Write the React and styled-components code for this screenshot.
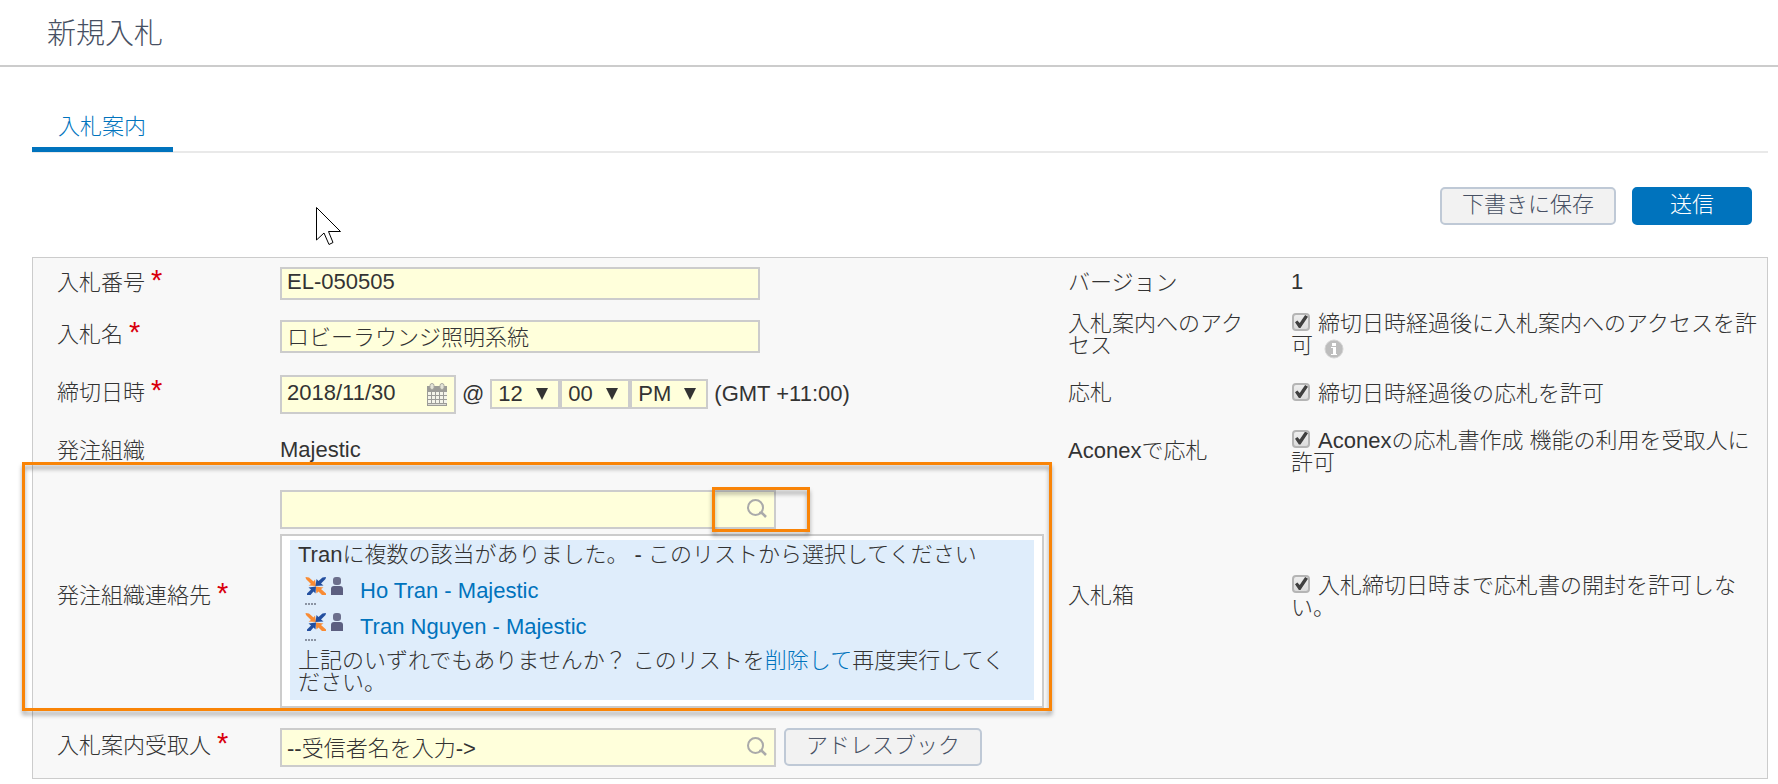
import React, { useState } from 'react';
import styled, { createGlobalStyle } from 'styled-components';

const GlobalStyle = createGlobalStyle`
  * {
    box-sizing: border-box;
  }

  body {
    margin: 0;
    background-color: #fff;
    color: #333;
    font-family: "Liberation Sans", "Noto Sans CJK JP", sans-serif;
    font-size: 22px;
    font-weight: 300;
    line-height: 22px;
  }

  input, select, button {
    font: inherit;
    color: inherit;
  }
`;

const PageHeader = styled.header`
  padding: 18px 47px 14px;
  border-bottom: 2px solid #ccc;
`;

const Title = styled.h1`
  margin: 0;
  color: #475063;
  font-size: 29px;
  font-weight: 300;
  line-height: 33px;
`;

const PageBody = styled.main`
  padding: 38px 10px 5px 32px;
`;

const TabBar = styled.nav`
  display: flex;
  border-bottom: 2px solid #e9e9e9;
`;

const Tab = styled.a`
  margin-bottom: -1px;
  padding: 11px 27px 9px 26px;
  border-bottom: 5px solid #0073bd;
  color: #0073bd;
  text-decoration: none;
`;

const Toolbar = styled.div`
  position: relative;
  display: flex;
  justify-content: flex-end;
  gap: 16px;
  padding: 34px 16px 32px;
`;

const Button = styled.button`
  height: 38px;
  min-width: 120px;
  padding: 0 20px 2px;
  border: 2px solid ${(props) => (props.$primary ? '#0073bd' : '#bfc9d6')};
  border-radius: 5px;
  background-color: ${(props) => (props.$primary ? '#0073bd' : '#f2f2f2')};
  color: ${(props) => (props.$primary ? '#fff' : '#475063')};
  cursor: pointer;
`;

const Pointer = styled.svg`
  position: absolute;
  top: 53px;
  left: 283px;
  width: 28px;
  height: 42px;
`;

const Panel = styled.form`
  display: grid;
  grid-template-columns: 247px minmax(0, 788fr) 223px minmax(0, 476fr);
  grid-template-rows: 51px 54px 62px 53px auto auto;
  border: 1px solid #ccc;
  background-color: #f8f8f8;
`;

const LabelCell = styled.div`
  grid-row: ${(props) => props.$row};
  grid-column: ${(props) => props.$col || 1};
  align-self: center;
  padding-left: ${(props) => (props.$col ? 0 : 24)}px;
  padding-right: 32px;
  padding-bottom: 2px;
`;

const ValueCell = styled.div`
  grid-row: ${(props) => props.$row};
  grid-column: ${(props) => props.$col || 2};
  align-self: center;
`;

const TextCell = styled(ValueCell)`
  padding-bottom: 4px;
`;

const ContactCell = styled(ValueCell)`
  padding: 12px 24px 8px 0;
`;

const RecipientCell = styled(ValueCell)`
  display: flex;
  gap: 8px;
  padding: 12px 0 11px;
`;

const Star = styled.span`
  margin-left: 6px;
  color: #d9000d;
  font-size: 29px;
  line-height: 0;
`;

const TextInput = styled.input`
  display: block;
  width: 480px;
  max-width: 100%;
  height: 33px;
  padding: 0 5px 3px;
  border: 2px solid #ccc;
  border-radius: 0;
  background-color: #ffffdb;
  outline: none;
`;

const IconField = styled.div`
  position: relative;
  width: ${(props) => props.$width}px;
  max-width: 100%;

  ${TextInput} {
    width: 100%;
    height: 39px;
    padding-right: 36px;
  }
`;

const IconButton = styled.button`
  position: absolute;
  top: 8px;
  right: 8px;
  display: flex;
  padding: 0;
  border: none;
  background: none;
  cursor: pointer;
`;

const DateRow = styled.div`
  display: flex;
  align-items: center;
  gap: 6px;
`;

const SelectGroup = styled.div`
  display: flex;
`;

const SelectBox = styled.div`
  position: relative;
  width: ${(props) => props.$width}px;

  &::after {
    content: '';
    position: absolute;
    top: 9px;
    right: 12px;
    border-top: 12px solid #333;
    border-left: 6px solid transparent;
    border-right: 6px solid transparent;
    pointer-events: none;
  }
`;

const Select = styled.select`
  appearance: none;
  display: block;
  width: 100%;
  height: 30px;
  padding: 0 6px;
  border: 2px solid #ccc;
  border-radius: 0;
  background-color: #ffffdb;
  line-height: 22px;
`;

const MatchBox = styled.div`
  margin-top: 5px;
  padding: 4px 8px 6px;
  border: 2px solid #ccc;
  background-color: #fff;
`;

const MatchPanel = styled.div`
  padding: 4px 8px 6px;
  background-color: #dfedfb;
`;

const MatchText = styled.p`
  margin: 0;
`;

const MatchList = styled.ul`
  margin: 7px 0 5px;
  padding: 0 0 0 7px;
  list-style: none;
`;

const MatchItem = styled.li`
  display: flex;
  align-items: center;
  height: 36px;
`;

const MatchIcons = styled.span`
  width: 55px;
  height: 28px;
`;

const Link = styled.a`
  color: #0073bd;
  text-decoration: none;
`;

const Checkbox = styled.input`
  appearance: none;
  position: relative;
  width: 18px;
  height: 18px;
  margin: 0 8px 0 1px;
  border: 2px solid #b5b5b5;
  border-radius: 4px;
  background-image: linear-gradient(#eee, #dcdcdc);
  vertical-align: 0;

  &:checked::before {
    content: '';
    position: absolute;
    inset: 0 0 1px 1px;
    background-color: #404040;
    clip-path: polygon(0 56%, 18% 42%, 36% 62%, 78% 0, 100% 14%, 42% 100%, 30% 100%);
  }
`;

const InfoMark = styled.svg`
  width: 20px;
  height: 20px;
  margin-left: 11px;
  vertical-align: -6px;
`;

const Highlight = styled.div`
  z-index: 2;
  border: 3px solid #f98407;
  filter: drop-shadow(0 4px 2px rgba(0, 0, 0, 0.35));
  pointer-events: none;
`;

const ContactHighlight = styled(Highlight)`
  grid-row: 5;
  grid-column: 1 / 3;
  margin: -16px 16px 5px -11px;
`;

const SearchHighlight = styled(Highlight)`
  position: absolute;
  top: -3px;
  bottom: -3px;
  right: -34px;
  width: 98px;
`;

const SearchIcon = () => (
  <svg width="22" height="22" viewBox="0 0 22 22" fill="none" stroke="#aaa" aria-hidden="true">
    <circle cx="9.5" cy="9.5" r="7.5" strokeWidth="2" />
    <path d="M13 15h3l4 4" strokeWidth="2.6" />
  </svg>
);

const CalendarIcon = () => (
  <svg width="22" height="24" viewBox="0 0 22 24" aria-hidden="true">
    <path d="M1 3h20v20H1z" fill="#9c9c98" />
    <rect x="4" y="0.5" width="4" height="6" rx="2" fill="#e4e4d8" stroke="#a8a8a0" />
    <rect x="14" y="0.5" width="4" height="6" rx="2" fill="#e4e4d8" stroke="#a8a8a0" />
    {[9, 13, 17].map((y) =>
      [2, 6, 10, 14, 18].map((x) => (
        <rect key={`${x}-${y}`} x={x} y={y} width="3" height="3" fill="#f4f4ea" />
      ))
    )}
    <path d="M2 21h18v1H2z" fill="#dcdcd4" />
  </svg>
);

const PersonIcons = () => (
  <svg width="40" height="28" viewBox="0 0 40 28" aria-hidden="true">
    <g fill="#f98b33">
      <path d="M0.500 0L4 0.500L8.500 4.500L10 2.500L11 9L3.500 8.500L6 7L1 2Z" />
      <path d="M21 18L17 18L13.500 14.500L11.500 16.500L10.500 9.500L18.500 10.500L16 12L21 16.500Z" />
    </g>
    <g fill="#234f9f">
      <path d="M21 0L17.500 0.500L13.500 4L11.500 2L10.500 9L18.500 8.500L16 6.500L20.500 2Z" />
      <path d="M2 18L5.500 18L8.500 14.500L10.500 16.500L11 9.500L3.500 10.500L6 12.500L2 16.500Z" />
    </g>
    <rect x="28" y="0" width="8" height="8" rx="3" fill="#6c6f8c" />
    <path d="M26 18v-6q0-3 3-3h6q3 0 3 3v6z" fill="#5c5f80" />
    <path d="M0 27h12" stroke="#8b94a3" strokeWidth="2" strokeDasharray="2 1" />
  </svg>
);

const FieldLabel = ({ row, col, htmlFor, required, children }) => (
  <LabelCell $row={row} $col={col}>
    <label htmlFor={htmlFor}>{children}</label>
    {required && <Star>*</Star>}
  </LabelCell>
);

const CheckField = ({ row, id, children }) => (
  <ValueCell $row={row} $col={4}>
    <Checkbox type="checkbox" id={id} defaultChecked />
    <label htmlFor={id}>{children}</label>
    {id === 'access' && (
      <InfoMark viewBox="0 0 20 20" aria-hidden="true">
        <circle cx="10" cy="10" r="9" fill="#bdbdbd" stroke="#d4d4d4" />
        <path d="M8 4h4v3H8zM7 8h5v7h1v1H7v-1h2V9H7z" fill="#fff" />
      </InfoMark>
    )}
  </ValueCell>
);

const TimeSelect = ({ label, width, options }) => (
  <SelectBox $width={width}>
    <Select aria-label={label}>
      {options.map((option) => (
        <option key={option}>{option}</option>
      ))}
    </Select>
  </SelectBox>
);

const matches = ['Ho Tran - Majestic', 'Tran Nguyen - Majestic'];

const App = () => {
  const [tender, setTender] = useState({
    number: 'EL-050505',
    name: 'ロビーラウンジ照明系統',
    closing: '2018/11/30',
    contact: '',
    recipients: '--受信者名を入力->',
  });

  const handleChange = (e) => {
    const { name, value } = e.target;
    setTender((prevTender) => ({ ...prevTender, [name]: value }));
  };

  const field = (name) => ({ id: name, name, value: tender[name], onChange: handleChange });

  return (
    <>
      <GlobalStyle />
      <PageHeader>
        <Title>新規入札</Title>
      </PageHeader>
      <PageBody>
        <TabBar>
          <Tab href="#invitation">入札案内</Tab>
        </TabBar>
        <Toolbar>
          <Pointer viewBox="0 0 28 42" aria-hidden="true">
            <path
              d="M1.5 1.5V34L9 27L14 38.5L18 36.5L13.500 25.500H25.500Z"
              fill="#fff"
              stroke="#000"
            />
          </Pointer>
          <Button type="button">下書きに保存</Button>
          <Button type="submit" form="tender" $primary>送信</Button>
        </Toolbar>
        <Panel id="tender" onSubmit={(e) => e.preventDefault()}>
          <FieldLabel row={1} htmlFor="number" required>入札番号</FieldLabel>
          <ValueCell $row={1}>
            <TextInput type="text" {...field('number')} />
          </ValueCell>
          <LabelCell $row={1} $col={3}>バージョン</LabelCell>
          <TextCell $row={1} $col={4}>1</TextCell>

          <FieldLabel row={2} htmlFor="name" required>入札名</FieldLabel>
          <ValueCell $row={2}>
            <TextInput type="text" {...field('name')} />
          </ValueCell>
          <LabelCell $row={2} $col={3}>入札案内へのアクセス</LabelCell>
          <CheckField row={2} id="access">締切日時経過後に入札案内へのアクセスを許可</CheckField>

          <FieldLabel row={3} htmlFor="closing" required>締切日時</FieldLabel>
          <ValueCell $row={3}>
            <DateRow>
              <IconField $width={176}>
                <TextInput type="text" {...field('closing')} />
                <IconButton type="button" aria-label="カレンダー">
                  <CalendarIcon />
                </IconButton>
              </IconField>
              <span>@</span>
              <SelectGroup>
                <TimeSelect label="時" width={70} options={['12', '01', '02', '03']} />
                <TimeSelect label="分" width={70} options={['00', '15', '30', '45']} />
                <TimeSelect label="午前/午後" width={78} options={['PM', 'AM']} />
              </SelectGroup>
              <span>(GMT +11:00)</span>
            </DateRow>
          </ValueCell>
          <LabelCell $row={3} $col={3}>応札</LabelCell>
          <CheckField row={3} id="late">締切日時経過後の応札を許可</CheckField>

          <LabelCell $row={4}>発注組織</LabelCell>
          <TextCell $row={4}>Majestic</TextCell>
          <LabelCell $row={4} $col={3}>Aconexで応札</LabelCell>
          <CheckField row={4} id="online">Aconexの応札書作成 機能の利用を受取人に許可</CheckField>

          <FieldLabel row={5} htmlFor="contact" required>発注組織連絡先</FieldLabel>
          <ContactCell $row={5}>
            <IconField $width={496}>
              <TextInput type="text" {...field('contact')} />
              <IconButton type="button" aria-label="連絡先を検索">
                <SearchIcon />
              </IconButton>
              <SearchHighlight />
            </IconField>
            <MatchBox>
              <MatchPanel>
                <MatchText>Tranに複数の該当がありました。 - このリストから選択してください</MatchText>
                <MatchList>
                  {matches.map((match) => (
                    <MatchItem key={match}>
                      <MatchIcons>
                        <PersonIcons />
                      </MatchIcons>
                      <Link href="#contact">{match}</Link>
                    </MatchItem>
                  ))}
                </MatchList>
                <MatchText>
                  上記のいずれでもありませんか？ このリストを<Link href="#clear">削除して</Link>再度実行してください。
                </MatchText>
              </MatchPanel>
            </MatchBox>
          </ContactCell>
          <LabelCell $row={5} $col={3}>入札箱</LabelCell>
          <CheckField row={5} id="sealed">入札締切日時まで応札書の開封を許可しない。</CheckField>
          <ContactHighlight />

          <FieldLabel row={6} htmlFor="recipients" required>入札案内受取人</FieldLabel>
          <RecipientCell $row={6}>
            <IconField $width={496}>
              <TextInput type="text" {...field('recipients')} />
              <IconButton type="button" aria-label="受取人を検索">
                <SearchIcon />
              </IconButton>
            </IconField>
            <Button type="button">アドレスブック</Button>
          </RecipientCell>
        </Panel>
      </PageBody>
    </>
  );
};

export default App;
